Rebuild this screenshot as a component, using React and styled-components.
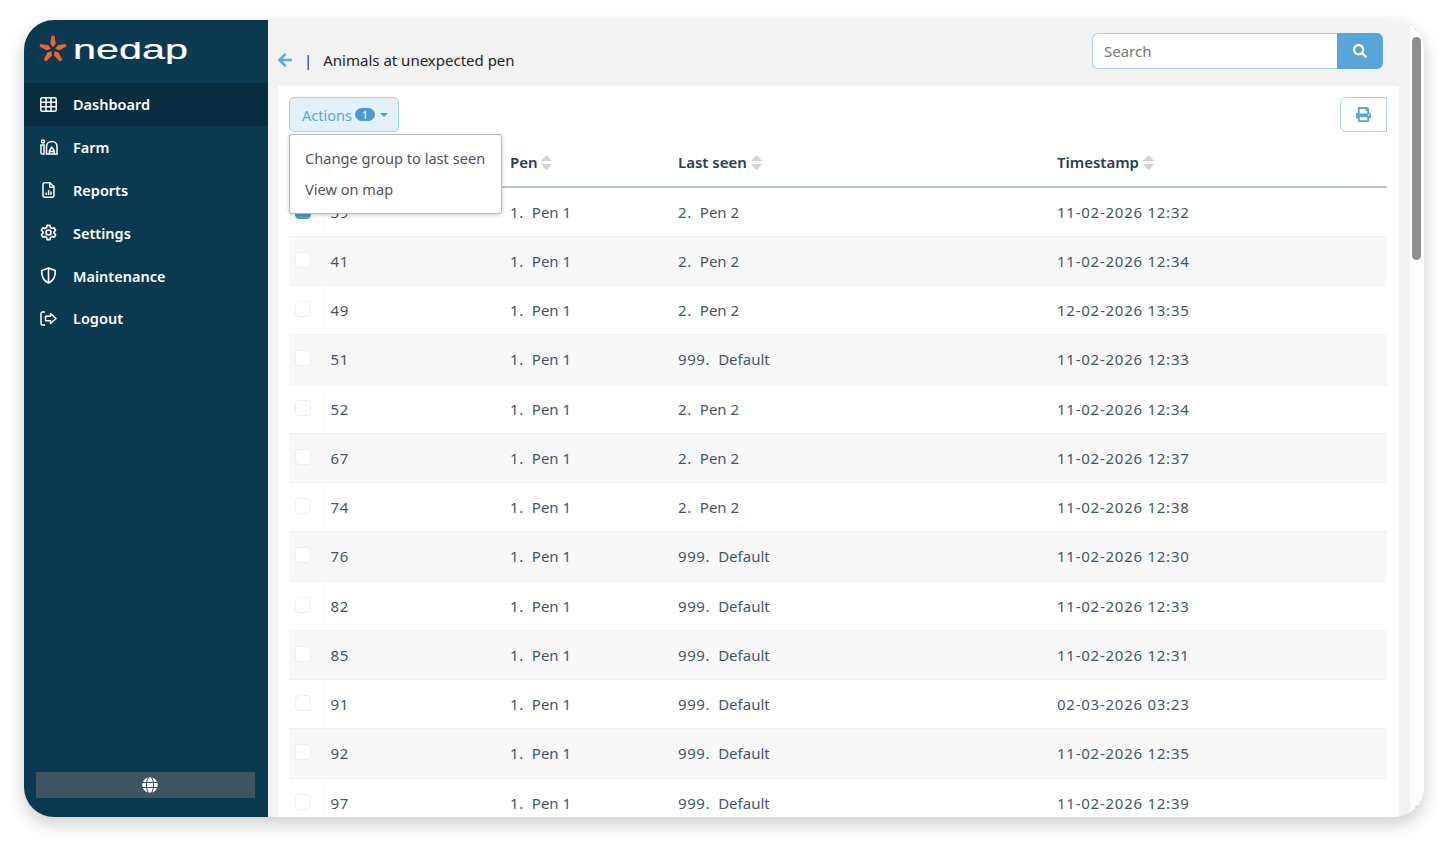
import React from 'react';
import styled, { createGlobalStyle } from 'styled-components';
import { FaSearch, FaPrint, FaGlobe, FaArrowLeft } from 'react-icons/fa';

const rows = [
  ['39', '1.', 'Pen 1', '2.', 'Pen 2', '11-02-2026 12:32'],
  ['41', '1.', 'Pen 1', '2.', 'Pen 2', '11-02-2026 12:34'],
  ['49', '1.', 'Pen 1', '2.', 'Pen 2', '12-02-2026 13:35'],
  ['51', '1.', 'Pen 1', '999.', 'Default', '11-02-2026 12:33'],
  ['52', '1.', 'Pen 1', '2.', 'Pen 2', '11-02-2026 12:34'],
  ['67', '1.', 'Pen 1', '2.', 'Pen 2', '11-02-2026 12:37'],
  ['74', '1.', 'Pen 1', '2.', 'Pen 2', '11-02-2026 12:38'],
  ['76', '1.', 'Pen 1', '999.', 'Default', '11-02-2026 12:30'],
  ['82', '1.', 'Pen 1', '999.', 'Default', '11-02-2026 12:33'],
  ['85', '1.', 'Pen 1', '999.', 'Default', '11-02-2026 12:31'],
  ['91', '1.', 'Pen 1', '999.', 'Default', '02-03-2026 03:23'],
  ['92', '1.', 'Pen 1', '999.', 'Default', '11-02-2026 12:35'],
  ['97', '1.', 'Pen 1', '999.', 'Default', '11-02-2026 12:39'],
];

const Star = () => (
  <svg width="28" height="28" viewBox="0 0 28 28">
    <g fill="#f0642d">
      {[0, 72, 144, 216, 288].map((a) => (
        <path key={a} d="M12.600 .8h2.800l1.300 8-2.700 3.400-2.700-3.400z" transform={`rotate(${a} 14 14.500)`} />
      ))}
    </g>
  </svg>
);

const GridIcon = () => (
  <svg width="17" height="15" viewBox="0 0 17 15" fill="none" stroke="#fff" strokeWidth="1.500">
    <rect x=".8" y=".8" width="15.400" height="13.400" rx="1.500" />
    <path d="M.8 5.200h15.400M.8 9.800h15.400M6 .8v13.400M11 .8v13.400" />
  </svg>
);

const FarmIcon = () => (
  <svg width="18" height="16" viewBox="0 0 18 16" fill="none" stroke="#fff" strokeWidth="1.500">
    <circle cx="3" cy="2.500" r="1.500" />
    <path d="M1 6h3v9H2.200C1.500 15 1 14.500 1 13.800z" />
    <path d="M6.500 15V7.500C6.500 4.500 9 2.500 11.800 2.500s5.200 2 5.200 5V15z" />
    <path d="M9.500 15v-3.500l2.300-3.500 2.300 3.500V15M9.500 12.500h4.600" />
  </svg>
);

const ReportIcon = () => (
  <svg width="17" height="16" viewBox="0 0 17 16">
    <path fill="none" stroke="#fff" strokeWidth="1.500" d="M4.500 .8h5.500l4 4v8.700c0 1-.6 1.700-1.500 1.700h-8c-.9 0-1.500-.7-1.500-1.700V2.500C3 1.500 3.600.8 4.500.8z" />
    <path fill="#fff" d="M9 1h1.500v3.500H14V6H9zM5.500 13h1.400v-2.500H5.500zM7.900 13h1.400V8h-1.400zM10.300 13h1.400v-3.500h-1.400z" />
  </svg>
);

const GearIcon = () => (
  <svg width="17" height="17" viewBox="0 0 24 24" fill="none" stroke="#fff" strokeWidth="2.400" strokeLinejoin="round">
    <path d="M10 2h4l.7 3 2.300 1.300 3-.9 2 3.400-2.200 2.200v2l2.200 2.200-2 3.400-3-.9-2.300 1.300-.7 3h-4l-.7-3-2.300-1.300-3 .9-2-3.400L4.200 13v-2L2 8.800l2-3.400 3 .9 2.300-1.300z" />
    <circle cx="12" cy="12" r="3.500" />
  </svg>
);

const ShieldIcon = () => (
  <svg width="17" height="17" viewBox="0 0 17 17" fill="none" stroke="#fff" strokeWidth="1.600">
    <path d="M8.500 1l6.800 2.500c.2 5.500-2.100 10.500-6.800 12.500C3.800 14 1.500 9 1.700 3.500z" />
    <path d="M8.500 1v15" />
  </svg>
);

const LogoutIcon = () => (
  <svg width="17" height="15" viewBox="0 0 17 15" fill="none" stroke="#fff" strokeWidth="1.500" strokeLinejoin="round">
    <path d="M5 1H2.500C1.500 1 1 1.600 1 2.500v10c0 .9.5 1.500 1.500 1.500H5" />
    <path d="M10.500 2.500l5.500 5-5.500 5V9.800H5.500V5.200h5z" />
  </svg>
);

const nav = [
  ['Dashboard', <GridIcon />, true],
  ['Farm', <FarmIcon />],
  ['Reports', <ReportIcon />],
  ['Settings', <GearIcon />],
  ['Maintenance', <ShieldIcon />],
  ['Logout', <LogoutIcon />],
];

const SortArrows = () => (
  <SortSvg width="11" height="15" viewBox="0 0 11 15">
    <path d="M5.500 0L11 6H0z" />
    <path d="M5.500 15L0 9h11z" />
  </SortSvg>
);

const App = () => {
  return (
    <>
      <GlobalStyle />
      <Page>
        <AppWindow>
          <Sidebar>
            <Brand>
              <Star />
              <Wordmark>nedap</Wordmark>
            </Brand>
            <Nav>
              {nav.map(([label, icon, active]) => (
                <NavItem key={label} $active={active}>
                  <NavIcon>{icon}</NavIcon>
                  {label}
                </NavItem>
              ))}
            </Nav>
            <LangButton>
              <FaGlobe size={16} />
            </LangButton>
          </Sidebar>

          <Main>
            <Header>
              <TitleGroup>
                <BackArrow><FaArrowLeft size={16} /></BackArrow>
                <Divider>|</Divider>
                <Title>Animals at unexpected pen</Title>
              </TitleGroup>
              <SearchBox>
                <SearchInput placeholder="Search" />
                <SearchButton><FaSearch size={14} /></SearchButton>
              </SearchBox>
            </Header>

            <Panel>
              <Toolbar>
                <ActionsButton>
                  Actions <Badge>1</Badge> <Caret />
                </ActionsButton>
                <PrintButton><FaPrint size={15} /></PrintButton>
                <Dropdown>
                  <DropdownItem>Change group to last seen</DropdownItem>
                  <DropdownItem>View on map</DropdownItem>
                </Dropdown>
              </Toolbar>

              <Table>
                <colgroup>
                  <col width="35" />
                  <col width="180" />
                  <col width="168" />
                  <col width="379" />
                  <col />
                </colgroup>
                <thead>
                  <tr>
                    <Th />
                    <Th />
                    <Th>Pen <SortArrows /></Th>
                    <Th>Last seen <SortArrows /></Th>
                    <Th>Timestamp <SortArrows /></Th>
                  </tr>
                </thead>
                <tbody>
                  {rows.map((r, i) => (
                    <Row key={r[0]}>
                      <CheckCell><Check $checked={i === 0} /></CheckCell>
                      <Td $spaced>{r[0]}</Td>
                      <Td><Code>{r[1]}</Code>{r[2]}</Td>
                      <Td><Code>{r[3]}</Code>{r[4]}</Td>
                      <Td $spaced>{r[5]}</Td>
                    </Row>
                  ))}
                </tbody>
              </Table>
            </Panel>
          </Main>

          <ScrollTrack>
            <ScrollArrow />
            <ScrollThumb />
            <ScrollArrow $down />
          </ScrollTrack>
        </AppWindow>
      </Page>
    </>
  );
};

export default App;

const font = `"Noto Sans", Roboto, Arial, sans-serif`;

const GlobalStyle = createGlobalStyle`
  html, body {
    margin: 0;
    height: 100%;
    background: #fff;
    overflow: hidden;
  }
  body {
    font-family: ${font};
  }
  * {
    box-sizing: border-box;
  }
`;

const Page = styled.div`
  padding: 20px 27px 28px 24px;
  height: 845px;
`;

const AppWindow = styled.div`
  display: flex;
  height: 797px;
  border-radius: 30px;
  overflow: hidden;
  background: #f2f2f2;
  box-shadow: 0 7px 18px rgba(0, 0, 0, 0.2);
`;

const Sidebar = styled.aside`
  width: 244px;
  flex: none;
  display: flex;
  flex-direction: column;
  background: #0b3a50;
`;

const Brand = styled.div`
  height: 63px;
  display: flex;
  align-items: center;
  gap: 6px;
  padding: 0 0 6px 15px;
`;

/* trims the ascender of the d, the mark has a flat top */
const Wordmark = styled.span`
  display: inline-block;
  margin-top: 4px;
  font-family: "Liberation Sans", Arial, sans-serif;
  font-size: 27px;
  line-height: 1;
  color: #fff;
  -webkit-text-stroke: 0.2px #fff;
  transform: scaleX(1.53);
  transform-origin: left center;
  clip-path: inset(5px 0 0 0);
`;

const Nav = styled.nav`
  flex: 1;
`;

const NavItem = styled.div`
  height: 42.800px;
  display: flex;
  align-items: center;
  padding-left: 16px;
  color: #fff;
  font-size: 14.500px;
  font-weight: 600;
  background: ${({ $active }) => ($active ? '#082d3e' : 'transparent')};
`;

const NavIcon = styled.span`
  width: 33px;
  display: flex;
  align-items: center;
`;

const LangButton = styled.div`
  height: 26px;
  margin: 0 13px 19px 12px;
  padding-left: 8px;
  display: flex;
  align-items: center;
  justify-content: center;
  background: #3d5561;
  color: #fff;
`;

const Main = styled.main`
  width: 1142px;
  flex: none;
  display: flex;
  flex-direction: column;
  overflow: hidden;
`;

const Header = styled.header`
  height: 66px;
  flex: none;
  display: flex;
  justify-content: space-between;
  padding: 13px 27px 0 9px;
`;

const TitleGroup = styled.div`
  display: flex;
  align-items: center;
  padding-top: 18px;
  height: 36px;
`;

const BackArrow = styled.span`
  display: flex;
  color: #5aa7da;
`;

const Divider = styled.span`
  margin: 0 11px 0 11px;
  font-size: 15px;
  color: #333;
`;

const Title = styled.h1`
  margin: 0;
  font-size: 15px;
  font-weight: 400;
  color: #252525;
`;

const SearchBox = styled.div`
  display: flex;
  height: 36px;
`;

const SearchInput = styled.input`
  width: 245px;
  padding: 0 11px;
  border: 1px solid #a9d0ea;
  border-right: 0;
  border-radius: 6px 0 0 6px;
  background: #fff;
  font-family: ${font};
  font-size: 15px;
  outline: none;

  &::placeholder {
    color: #777;
    opacity: 1;
  }
`;

const SearchButton = styled.button`
  width: 46px;
  border: 0;
  border-radius: 0 6px 6px 0;
  background: #58a6d9;
  color: #fff;
  display: flex;
  align-items: center;
  justify-content: center;
`;

const Panel = styled.section`
  flex: 1;
  margin: 0 11px 0 10px;
  padding: 11px 12px 0 11px;
  background: #fff;
  overflow: hidden;
`;

const Toolbar = styled.div`
  position: relative;
  height: 35px;
  display: flex;
  justify-content: space-between;
`;

const ActionsButton = styled.button`
  display: flex;
  align-items: center;
  gap: 3px;
  width: 110px;
  padding: 0 0 0 12px;
  border: 1px solid #a9d3ee;
  border-radius: 5px;
  background: #e3f1fb;
  color: #58a6d9;
  font-family: ${font};
  font-size: 14.500px;
`;

const Badge = styled.span`
  width: 20px;
  height: 13px;
  border-radius: 7px;
  background: #4b9ad0;
  color: #fff;
  font-size: 11px;
  line-height: 13px;
  text-align: center;
`;

const Caret = styled.span`
  margin-left: 2px;
  border-top: 4px solid #4b9ad0;
  border-left: 4px solid transparent;
  border-right: 4px solid transparent;
`;

const PrintButton = styled.button`
  width: 47px;
  border: 1px solid #a9d3ee;
  border-radius: 6px 0 0 6px;
  background: #fff;
  color: #58a6d9;
  display: flex;
  align-items: center;
  justify-content: center;
`;

const Dropdown = styled.div`
  position: absolute;
  top: 37px;
  left: 0;
  z-index: 5;
  width: 213px;
  height: 80px;
  padding: 8px 0;
  background: #fff;
  border: 1px solid #b9b9b9;
  border-radius: 3px;
  box-shadow: 0 1px 4px rgba(0, 0, 0, 0.2);
`;

const DropdownItem = styled.div`
  height: 31px;
  padding-left: 15px;
  font-size: 14.600px;
  line-height: 31px;
  color: #555;
  white-space: nowrap;
`;

const Table = styled.table`
  width: 100%;
  border-collapse: collapse;
  table-layout: fixed;
`;

const Th = styled.th`
  height: 55px;
  padding: 5px 0 0 6px;
  text-align: left;
  font-size: 15px;
  font-weight: 600;
  color: #1f4054;
  border-bottom: 2px solid #b5c4cb;
`;

const SortSvg = styled.svg`
  fill: #d2d2d2;
  vertical-align: -2px;
`;

const Row = styled.tr`
  &:nth-child(even) {
    background: #f8f8f8;
  }
`;

const Td = styled.td`
  height: 49.250px;
  padding: 0 0 0 6px;
  font-size: 15px;
  color: #42586a;
  border-bottom: 1px solid #f1f1f1;
  letter-spacing: ${({ $spaced }) => ($spaced ? '0.75px' : '0')};
`;

const CheckCell = styled(Td)`
  border-right: 1px solid #fbfbfb;
`;

const Code = styled.span`
  margin-right: 8px;
  letter-spacing: 0.6px;
`;

const Check = styled.span`
  display: block;
  width: 16px;
  height: 16px;
  margin-bottom: 2px;
  border-radius: 4px;
  border: 1px solid ${({ $checked }) => ($checked ? '#4b9ad0' : '#eeeeee')};
  background: ${({ $checked }) => ($checked ? '#4b9ad0' : '#fff')};
`;

const ScrollTrack = styled.div`
  flex: 1;
  display: flex;
  flex-direction: column;
  padding: 7px 3px 8px 2px;
  background: #fdfdfd;
`;

const ScrollArrow = styled.span`
  align-self: center;
  width: 0;
  height: 0;
  margin-top: ${({ $down }) => ($down ? 'auto' : '0')};
  margin-bottom: ${({ $down }) => ($down ? '0' : '7px')};
  border-left: 2px solid transparent;
  border-right: 2px solid transparent;
  ${({ $down }) => ($down ? 'border-top: 3px solid #999;' : 'border-bottom: 3px solid #999;')}
`;

const ScrollThumb = styled.div`
  height: 223px;
  border-radius: 5px;
  background: #8e8e8e;
`;
